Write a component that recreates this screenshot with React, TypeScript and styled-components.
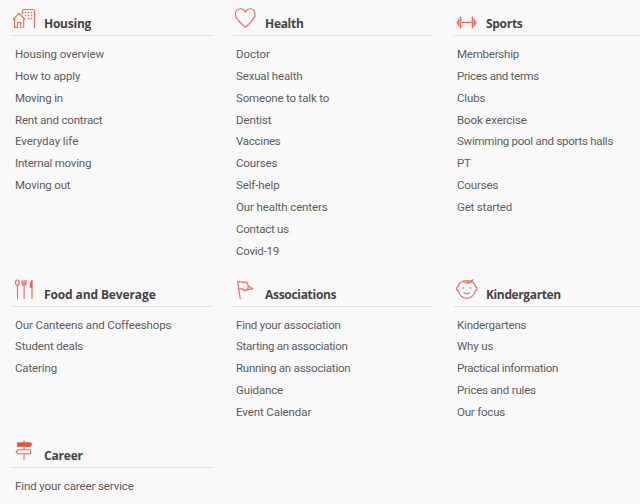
import React from "react";
import styled, { createGlobalStyle } from "styled-components";

const GlobalStyle = createGlobalStyle`
  * { box-sizing: border-box; }
  body {
    margin: 0;
    background: #f9f9f9;
    color: #5c5c5c;
    font-family: Roboto, "Liberation Sans", sans-serif;
    overflow: hidden;
  }
`;

const Menu = styled.nav`
  display: grid;
  grid-template-columns: repeat(3, 200px);
  column-gap: 21px;
  width: 640px;
  height: 504px;
  padding-left: 12px;
  align-content: start;
  overflow: hidden;
`;

const Section = styled.section`
  padding-bottom: 9px;
`;

const Header = styled.header`
  display: flex;
  align-items: flex-start;
  height: 36px;
  padding-top: 6px;
  border-bottom: 1px solid #dedede;
`;

const Icon = styled.svg`
  flex: none;
  width: 26px;
  height: 26px;
  fill: none;
  stroke: #f26656;
  stroke-width: 1.1;
  stroke-linecap: round;
  stroke-linejoin: round;
`;

const Title = styled.h2<{ $spacing: number }>`
  margin: 9px 0 0 6px;
  font-family: "Open Sans", sans-serif;
  font-size: 12px;
  line-height: 17px;
  font-weight: 700;
  letter-spacing: ${(p) => p.$spacing}px;
  color: #444;
  white-space: nowrap;
`;

const List = styled.ul`
  list-style: none;
  margin: 0;
  padding: 7px 0 0 3px;
`;

const Item = styled.li<{ $spacing: number }>`
  height: 21.87px;
  font-size: 11.5px;
  line-height: 22px;
  letter-spacing: ${(p) => p.$spacing}px;
  white-space: nowrap;
`;

const HousingIcon = () => (
  <Icon viewBox="0 0 26 26">
    <path d="M1.2 13.5 7 7.3l5.8 6.2M2.5 12.5v9h3v-5h3.2v5M11.7 12.5v9M10.5 8V5q0-1.5 1.5-1.5h9q1.5 0 1.5 1.5v16.5" />
    <path d="M13.5 6.5h.1M16.5 6.5h.1M19.5 6.5h.1M13.5 9.5h.1M16.5 9.5h.1M19.5 9.5h.1M16.5 12.5h.1M19.5 12.5h.1" strokeWidth="1.5" />
  </Icon>
);

const HealthIcon = () => (
  <Icon viewBox="0 0 26 26">
    <path d="M12.4 6.4C11.4 3.8 9.6 2.7 7.5 2.7c-3 0-5 2.2-5 5.2 0 5.2 4.6 8.5 9.9 13.4 5-4.9 9.6-8.2 9.6-13.4 0-3-1.8-5.2-4.7-5.2-2.2 0-4 1.1-4.9 3.7z" />
  </Icon>
);

const SportsIcon = () => (
  <Icon viewBox="0 0 26 26">
    <path d="M8 16.4h9.5" strokeLinecap="butt" strokeWidth="1.2" />
    <path d="M6.5 11.3v10.4M18.5 11.3v10.4" strokeWidth="1.6" />
    <path d="M4.6 13.3v6.4M20.5 13.3v6.4M3.3 15.2v2.5M21.8 15.2v2.5" strokeWidth="1.1" />
  </Icon>
);

const FoodIcon = () => (
  <Icon viewBox="0 0 26 26">
    <ellipse cx="5.4" cy="5.6" rx="1.9" ry="2.6" />
    <path d="M5.5 8.5v13M12.1 9.5v12M20 11v10.5" />
    <path d="M10.2 3.2v3.2q0 2 1.9 2t1.9-2V3.2M12.1 3.2v4M10.4 6h3.5" />
    <path d="M20.1 3.2q-1.7 1.2-1.7 4.8v2.3l1.7.7z" fill="#f04a38" />
  </Icon>
);

const FlagIcon = () => (
  <Icon viewBox="0 0 26 26">
    <path d="M7.2 21.5 4.6 4.7l9.3.7 1.4 3.5 4.5 2.7-8.9 2-.9-1.7-4.2.1M15.3 8.9 14.8 12l-3.9 1.6" />
  </Icon>
);

const ChildIcon = () => (
  <Icon viewBox="0 0 26 26">
    <path d="M3.8 10C4.8 6 8.5 3.6 12.8 3.6S20.7 6 21.8 10c.9.2 1.4 1.1 1.1 2.1-.2 1-.9 1.5-1.7 1.5C19.9 18.5 17 21.2 12.8 21.2S5.6 18.5 4.3 13.6c-.8 0-1.5-.6-1.7-1.5-.3-1 .2-1.9 1.2-2.1" />
    <path d="M9 4.4q3.5 2.6 8.7-.7M13.3 5.8q3.8-.1 5.7-3.2M10 15.8q2.7 2 5.4 0" />
    <path d="M9.2 11h.1M16.3 11h.1" strokeWidth="1.5" />
  </Icon>
);

const CareerIcon = () => (
  <Icon viewBox="0 0 26 26">
    <path d="M12 2.5v2M12 9v2.5M12 16v5.5" />
    <path d="M5.5 4.7h12.7l1.7 1.9-1.7 1.9H5.5z" fill="#f04a38" />
    <path d="M18.5 11.8H6l-2 1.9 2 2h12.5z" />
  </Icon>
);

type Entry = [label: string, spacing: number];

interface SectionData {
  title: string;
  spacing: number;
  icon: React.FC;
  items: Entry[];
}

const sections: SectionData[] = [
  {
    title: "Housing",
    spacing: -0.25,
    icon: HousingIcon,
    items: [
      ["Housing overview", -0.1],
      ["How to apply", -0.12],
      ["Moving in", -0.2],
      ["Rent and contract", -0.18],
      ["Everyday life", -0.05],
      ["Internal moving", -0.2],
      ["Moving out", -0.18],
    ],
  },
  {
    title: "Health",
    spacing: -0.3,
    icon: HealthIcon,
    items: [
      ["Doctor", -0.08],
      ["Sexual health", -0.15],
      ["Someone to talk to", -0.17],
      ["Dentist", -0.12],
      ["Vaccines", -0.25],
      ["Courses", -0.14],
      ["Self-help", -0.12],
      ["Our health centers", -0.11],
      ["Contact us", -0.25],
      ["Covid-19", -0.25],
    ],
  },
  {
    title: "Sports",
    spacing: -0.3,
    icon: SportsIcon,
    items: [
      ["Membership", -0.22],
      ["Prices and terms", -0.29],
      ["Clubs", -0.15],
      ["Book exercise", -0.13],
      ["Swimming pool and sports halls", -0.26],
      ["PT", -0.3],
      ["Courses", -0.14],
      ["Get started", -0.18],
    ],
  },
  {
    title: "Food and Beverage",
    spacing: -0.12,
    icon: FoodIcon,
    items: [
      ["Our Canteens and Coffeeshops", -0.11],
      ["Student deals", -0.15],
      ["Catering", -0.14],
    ],
  },
  {
    title: "Associations",
    spacing: -0.3,
    icon: FlagIcon,
    items: [
      ["Find your association", -0.21],
      ["Starting an association", -0.28],
      ["Running an association", -0.22],
      ["Guidance", -0.14],
      ["Event Calendar", -0.1],
    ],
  },
  {
    title: "Kindergarten",
    spacing: -0.38,
    icon: ChildIcon,
    items: [
      ["Kindergartens", -0.19],
      ["Why us", -0.15],
      ["Practical information", -0.29],
      ["Prices and rules", -0.19],
      ["Our focus", -0.2],
    ],
  },
  {
    title: "Career",
    spacing: -0.2,
    icon: CareerIcon,
    items: [["Find your career service", -0.11]],
  },
];

export default function App() {
  return (
    <>
      <GlobalStyle />
      <Menu>
        {sections.map(({ title, spacing, icon: Glyph, items }) => (
          <Section key={title}>
            <Header>
              <Glyph />
              <Title $spacing={spacing}>{title}</Title>
            </Header>
            <List>
              {items.map(([label, gap]) => (
                <Item key={label} $spacing={gap}>
                  {label}
                </Item>
              ))}
            </List>
          </Section>
        ))}
      </Menu>
    </>
  );
}
